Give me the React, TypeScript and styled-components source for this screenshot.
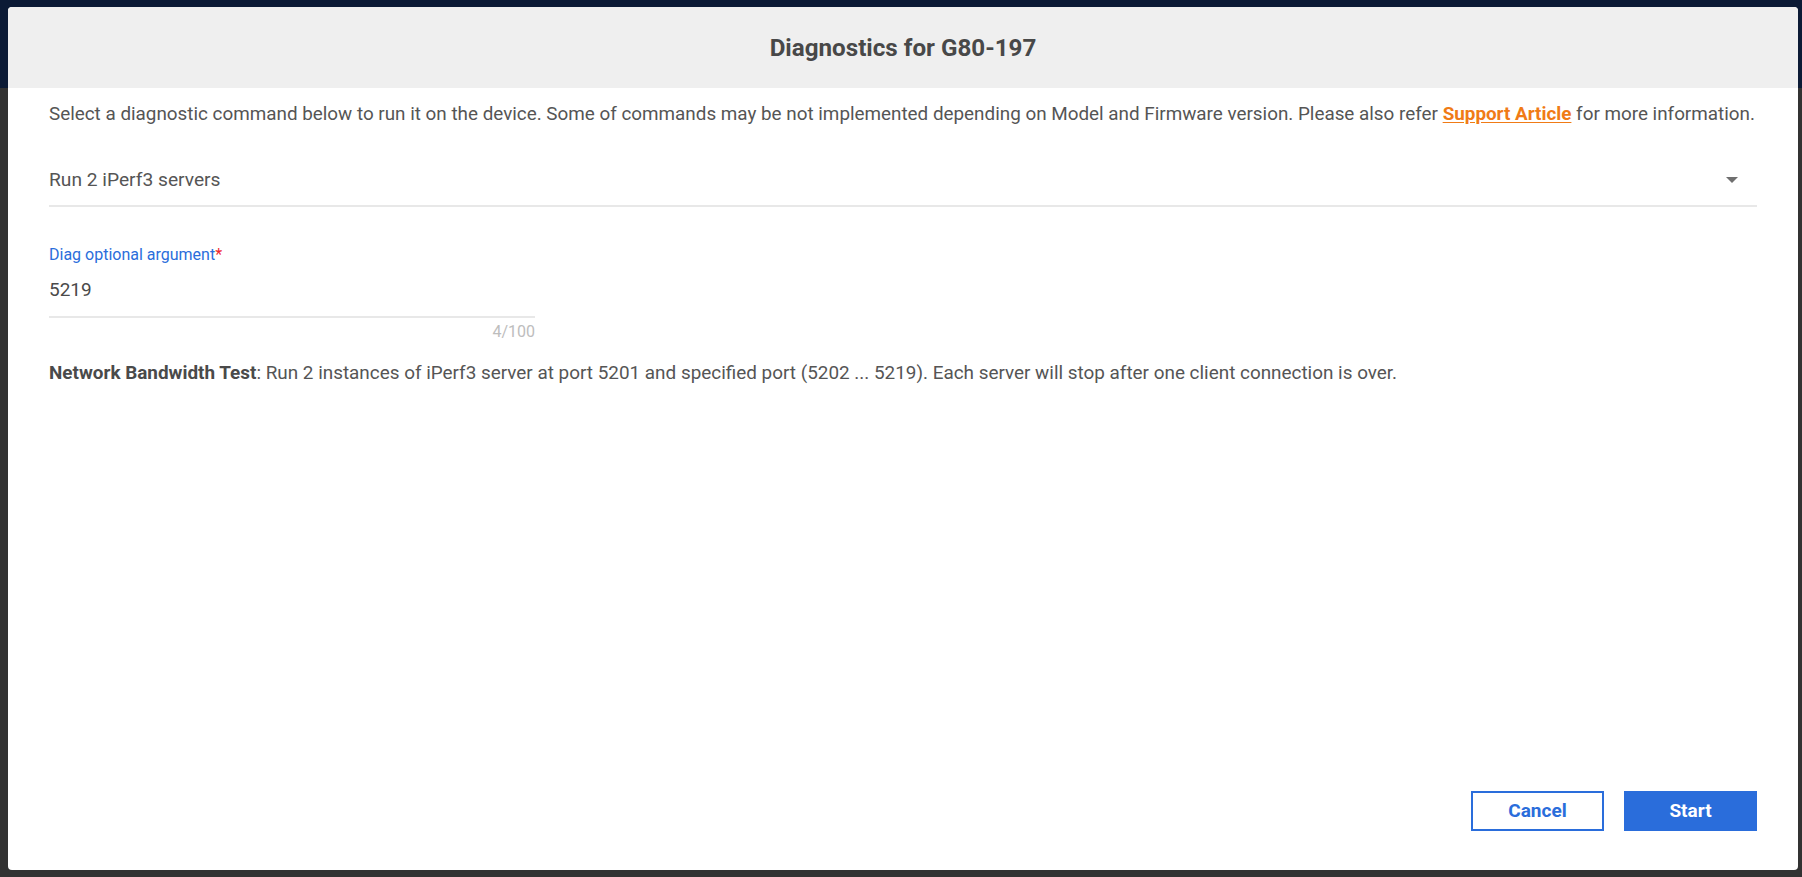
import React from "react";
import styled, { createGlobalStyle } from "styled-components";

const GlobalStyle = createGlobalStyle`
  html, body {
    margin: 0;
    padding: 0;
    background: #333333;
    font-family: Roboto, "Liberation Sans", Arial, sans-serif;
  }
  * { box-sizing: border-box; }
`;

const Page = styled.div`
  position: relative;
  width: 1802px;
  height: 877px;
  overflow: hidden;
  background: #323232;
`;

const NavBar = styled.div`
  height: 88px;
  background: #0b1a35;
`;

const Overlay = styled.div`
  position: absolute;
  inset: 0;
  padding: 7px 4px 7px 8px;
  display: flex;
`;

const Dialog = styled.div`
  flex: 1;
  display: flex;
  flex-direction: column;
  background: #ffffff;
  border-radius: 4px;
  overflow: hidden;
`;

const Header = styled.div`
  height: 81px;
  flex: none;
  background: #efefef;
  display: flex;
  align-items: center;
  justify-content: center;
`;

const Title = styled.h2`
  margin: 0;
  font-size: 24.2px;
  font-weight: 700;
  color: #484848;
`;

const Body = styled.div`
  flex: 1;
  display: flex;
  flex-direction: column;
  padding: 13px 41px 39px 41px;
`;

const Intro = styled.p`
  margin: 0;
  font-size: 18.85px;
  line-height: 27px;
  color: #555555;
  white-space: nowrap;
`;

const Link = styled.a`
  color: #f07b16;
  font-weight: 700;
  text-decoration: underline;
  text-underline-offset: 2px;
`;

const SelectRow = styled.div`
  margin-top: 38px;
  display: flex;
  align-items: center;
  justify-content: space-between;
  padding: 0 19px 12px 0;
  border-bottom: 2px solid #e8e8e8;
`;

const SelectValue = styled.span`
  font-size: 19.2px;
  line-height: 27px;
  color: #555555;
`;

const Field = styled.div`
  margin-top: 36px;
  width: 486px;
  display: flex;
  flex-direction: column;
`;

const Label = styled.label`
  font-size: 16px;
  line-height: 24px;
  color: #2a6ddb;
`;

const Required = styled.span`
  color: #f0262e;
`;

const Value = styled.div`
  margin-top: 9px;
  font-size: 19px;
  line-height: 27px;
  color: #4a4a4a;
  padding-bottom: 13px;
  border-bottom: 2px solid #e8e8e8;
`;

const Counter = styled.div`
  margin-top: 4px;
  font-size: 16px;
  line-height: 20px;
  color: #bdbdbd;
  text-align: right;
`;

const Description = styled.p`
  margin: 17px 0 0;
  font-size: 18.9px;
  line-height: 27px;
  color: #555555;
`;

const Strong = styled.strong`
  font-weight: 700;
  color: #4a4a4a;
`;

const Actions = styled.div`
  margin-top: auto;
  display: flex;
  justify-content: flex-end;
  gap: 20px;
`;

const Button = styled.button<{ $primary?: boolean }>`
  width: 133px;
  height: 40px;
  padding: 0 0 2px;
  font-family: Roboto, "Liberation Sans", Arial, sans-serif;
  font-size: 19px;
  font-weight: 700;
  cursor: pointer;
  border: 2px solid #2a6ddb;
  background: ${(p) => (p.$primary ? "#2a6ddb" : "#ffffff")};
  color: ${(p) => (p.$primary ? "#ffffff" : "#2a6ddb")};
`;

const Arrow = () => (
  <svg width="12" height="6" viewBox="0 0 12 6">
    <path d="M0 0 L12 0 L6 6 Z" fill="#6f6f6f" />
  </svg>
);

export default function App() {
  return (
    <>
      <GlobalStyle />
      <Page>
        <NavBar />
        <Overlay>
          <Dialog>
            <Header>
              <Title>Diagnostics for G80-197</Title>
            </Header>
            <Body>
              <Intro>
                Select a diagnostic command below to run it on the device. Some of commands may be not implemented depending on Model and Firmware version. Please also refer{" "}
                <Link href="#">Support Article</Link> for more information.
              </Intro>
              <SelectRow>
                <SelectValue>Run 2 iPerf3 servers</SelectValue>
                <Arrow />
              </SelectRow>
              <Field>
                <Label>
                  Diag optional argument<Required>*</Required>
                </Label>
                <Value>5219</Value>
                <Counter>4/100</Counter>
              </Field>
              <Description>
                <Strong>Network Bandwidth Test</Strong>: Run 2 instances of iPerf3 server at port 5201 and specified port (5202 ... 5219). Each server will stop after one client connection is over.
              </Description>
              <Actions>
                <Button>Cancel</Button>
                <Button $primary>Start</Button>
              </Actions>
            </Body>
          </Dialog>
        </Overlay>
      </Page>
    </>
  );
}
